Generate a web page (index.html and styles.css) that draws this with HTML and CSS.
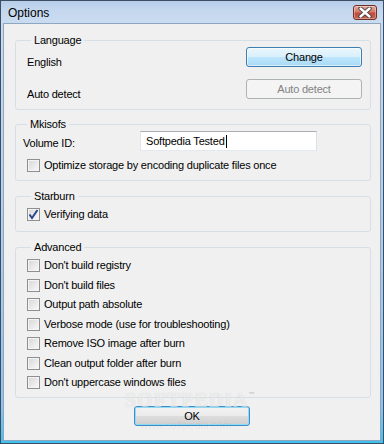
FILE: index.html
```html
<!DOCTYPE html>
<html>
<head>
<meta charset="utf-8">
<link rel="stylesheet" href="styles.css">
</head>
<body>
<div class="window">
  <div class="titlebar">
    <span class="title">Options</span>
    <button class="close" aria-label="Close">
      <svg width="14" height="11" viewBox="0 0 14 11">
        <path d="M2.5 1.5 L11.5 9.5 M11.5 1.5 L2.5 9.5" stroke="#3b3b3b" stroke-width="4.2" stroke-linecap="round"/>
        <path d="M2.5 1.5 L11.5 9.5 M11.5 1.5 L2.5 9.5" stroke="#ffffff" stroke-width="2.4" stroke-linecap="round"/>
      </svg>
    </button>
  </div>
  <div class="panel">
    <fieldset class="group g-lang">
      <legend>Language</legend>
      <div class="lang-row">
        <div class="lang-labels">
          <span>English</span>
          <span>Auto detect</span>
        </div>
        <div class="lang-buttons">
          <button class="btn btn-hot">Change</button>
          <button class="btn btn-disabled">Auto detect</button>
        </div>
      </div>
    </fieldset>

    <fieldset class="group g-mk">
      <legend>Mkisofs</legend>
      <div class="vol-row">
        <span class="vol-label">Volume ID:</span>
        <div class="textbox">Softpedia Tested<span class="caret"></span></div>
      </div>
      <label class="check"><span class="box"></span>Optimize storage by encoding duplicate files once</label>
    </fieldset>

    <fieldset class="group g-star">
      <legend>Starburn</legend>
      <label class="check"><span class="box checked"><svg width="11" height="11" viewBox="0 0 11 11"><path d="M1.5 5.5 L4 9 L9.5 1" fill="none" stroke="#2a4a8c" stroke-width="2"/></svg></span>Verifying data</label>
    </fieldset>

    <fieldset class="group g-adv">
      <legend>Advanced</legend>
      <div class="checklist">
        <label class="check"><span class="box"></span>Don't build registry</label>
        <label class="check"><span class="box"></span>Don't build files</label>
        <label class="check"><span class="box"></span>Output path absolute</label>
        <label class="check"><span class="box"></span>Verbose mode (use for troubleshooting)</label>
        <label class="check"><span class="box"></span>Remove ISO image after burn</label>
        <label class="check"><span class="box"></span>Clean output folder after burn</label>
        <label class="check"><span class="box"></span>Don't uppercase windows files</label>
      </div>
    </fieldset>

    <div class="footer">
      <button class="btn btn-default">OK</button>
    </div>

    <div class="watermark">SOFTPEDIA<sup>™</sup></div>
    <div class="watermark-url">www.softpedia.com</div>
  </div>
</div>
</body>
</html>
```

FILE: styles.css
```css
* { box-sizing: border-box; }

html, body {
  margin: 0;
  padding: 0;
  width: 384px;
  height: 444px;
  overflow: hidden;
}

body {
  font-family: "Liberation Sans", Arial, sans-serif;
  font-size: 11px;
  letter-spacing: -0.2px;
  color: #000;
}

.window {
  width: 384px;
  height: 444px;
  border: 1px solid #3c4e63;
  background: linear-gradient(to bottom, #bcd1ea 0%, #c9dbef 6%, #aecbeb 60%, #8cc4ee 92%, #3fc2ef 100%);
  padding: 0 2px 2px 2px;
  display: flex;
  flex-direction: column;
}

.titlebar {
  height: 22px;
  display: flex;
  justify-content: space-between;
  align-items: flex-start;
  padding: 0 6px 0 5px;
  background: linear-gradient(to bottom, #b7cde8 0%, #c3d7ee 40%, #cadcf0 100%);
  margin: 0 -2px;
}

.title {
  font-size: 12px;
  letter-spacing: 0;
  line-height: 13px;
  margin-top: 6px;
  margin-left: 2px;
  color: #000;
}

.close {
  width: 24px;
  height: 15px;
  margin-top: 4px;
  padding: 0;
  border: 1px solid #6e3127;
  border-radius: 3px;
  background: linear-gradient(to bottom, #e7a89b 0%, #d6796a 45%, #c24b3a 55%, #c9604c 100%);
  box-shadow: inset 0 0 0 1px rgba(255,255,255,0.35);
  display: flex;
  align-items: center;
  justify-content: center;
}

.close svg { display: block; }

.panel {
  position: relative;
  flex: 1;
  background: #f0f0f0;
  border: 1px solid #8fa6c0;
  padding: 10px 9px 0 11px;
  display: flex;
  flex-direction: column;
}

.group {
  margin: 0;
  border: 1px solid #d5dfe5;
  border-radius: 3px;
  padding: 0 8px 0 7px;
  min-width: 0;
}

.group legend {
  padding: 0 3px 0 3px;
  margin-left: 4px;
  line-height: 13px;
  height: 13px;
}

.g-lang { padding: 0 8px 8px 11px; }
.g-mk { margin-top: 8px; padding: 0 8px 8px 7px; }
.g-star { margin-top: 9px; padding: 5px 8px 10px 11px; }
.g-adv { margin-top: 9px; padding: 5px 8px 8px 11px; }

.lang-row {
  display: flex;
  justify-content: space-between;
}

.lang-labels {
  display: flex;
  flex-direction: column;
  padding-top: 9px;
  gap: 19px;
  line-height: 13px;
}

.lang-buttons {
  display: flex;
  flex-direction: column;
  gap: 12px;
}

.btn {
  font-family: "Liberation Sans", Arial, sans-serif;
  font-size: 11px;
  letter-spacing: -0.2px;
  width: 116px;
  height: 20px;
  padding: 0;
  border-radius: 3px;
  color: #000;
  line-height: 18px;
}

.btn-hot {
  border: 1px solid #3c7fb1;
  background: linear-gradient(to bottom, #eaf6fd 0%, #d9f0fc 48%, #bee6fd 52%, #a7d9f5 100%);
  box-shadow: inset 0 0 0 1px rgba(255,255,255,0.6);
}

.btn-disabled {
  border: 1px solid #adb2b5;
  background: #f4f4f4;
  color: #838383;
}

.btn-default {
  border: 1px solid #3c8ec9;
  background: linear-gradient(to bottom, #f2f2f2 0%, #ebebeb 48%, #dddddd 52%, #cfcfcf 100%);
  box-shadow: inset 0 0 0 1px #8fdcf6;
}

.vol-row {
  display: flex;
  align-items: flex-start;
  height: 20px;
}

.vol-label {
  line-height: 13px;
  margin-top: 6px;
  width: 117px;
}

.textbox {
  width: 177px;
  height: 20px;
  border: 1px solid #abadb3;
  border-left-color: #e2e3ea;
  border-right-color: #dbdfe6;
  border-bottom-color: #e3e9ef;
  background: #fff;
  padding: 0 0 0 5px;
  line-height: 18px;
  font-size: 11px;
  display: flex;
  align-items: center;
}

.caret {
  display: inline-block;
  width: 1px;
  height: 13px;
  background: #000;
  margin-left: 1px;
}

.g-mk .check { margin-top: 8px; margin-left: 4px; }

.check {
  display: flex;
  align-items: center;
  height: 13px;
  line-height: 13px;
  gap: 4px;
  white-space: nowrap;
}

.box {
  width: 13px;
  height: 13px;
  flex: none;
  border: 1px solid #8f8f8f;
  background: linear-gradient(135deg, #d6d6d6 0%, #e8e8e8 50%, #fafafa 100%);
  box-shadow: inset 0 0 0 1px #f4f4f4;
  display: flex;
  align-items: center;
  justify-content: center;
}

.box svg { display: block; }

.checklist {
  display: flex;
  flex-direction: column;
  gap: 6.5px;
}

.footer {
  display: flex;
  justify-content: center;
  margin-top: 8px;
  padding-right: 2px;
}

.watermark {
  position: absolute;
  left: 121px;
  top: 366px;
  font-family: "Liberation Serif", serif;
  font-weight: bold;
  font-size: 20px;
  line-height: 20px;
  letter-spacing: 1px;
  color: rgba(255,255,255,0.6);
  text-shadow: 0 0 1px rgba(0,0,0,0.15);
  pointer-events: none;
}

.watermark sup {
  font-size: 6px;
  font-family: "Liberation Sans", sans-serif;
  vertical-align: top;
  line-height: 8px;
  color: rgba(0,0,0,0.12);
}

.watermark-url {
  position: absolute;
  left: 136px;
  top: 395px;
  font-size: 11px;
  line-height: 13px;
  color: rgba(0,0,0,0.06);
  pointer-events: none;
}
```
